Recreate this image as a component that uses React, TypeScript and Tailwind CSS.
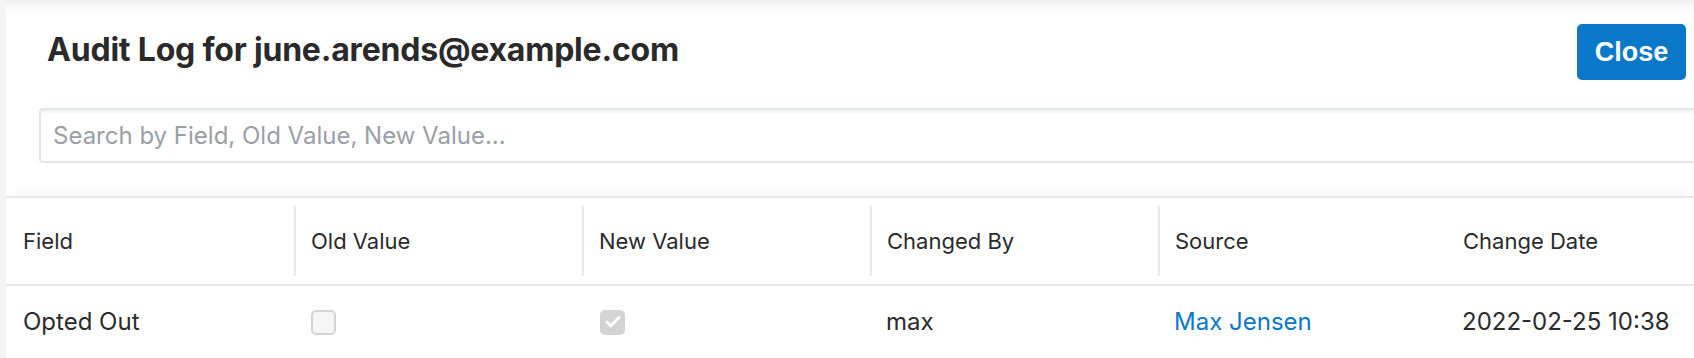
import { Check } from "lucide-react";

const columns = [
  { label: "Field", divider: false },
  { label: "Old Value", divider: true },
  { label: "New Value", divider: true },
  { label: "Changed By", divider: true },
  { label: "Source", divider: true },
  { label: "Change Date", divider: false },
];

function Checkbox({ checked }: { checked: boolean }) {
  if (checked) {
    return (
      <span className="flex h-[25px] w-[25px] items-center justify-center rounded-[5px] bg-[#d3d3d3]">
        <Check className="h-[18px] w-[18px] text-white" strokeWidth={4} />
      </span>
    );
  }
  return <span className="block h-[25px] w-[25px] rounded-[5px] border-2 border-[#d4d4d4] bg-[#f6f6f6]" />;
}

export default function App() {
  return (
    <div className="flex h-[358px] w-full overflow-hidden bg-[#f3f4f6] pl-[6px] font-['Inter',sans-serif] text-[#2b2b2b]">
      {/* modal panel */}
      <div className="flex min-w-0 flex-1 flex-col overflow-hidden bg-white shadow-[inset_0_14px_12px_-10px_rgba(0,0,0,0.09)]">
        <div className="flex items-start justify-between pl-[41px] pr-[8px] pt-[24px]">
          <h1 className="pt-[6px] text-[32px] font-bold leading-[40px] tracking-[-0.2px] text-[#2a2a2a]">
            Audit Log for june.arends@example.com
          </h1>
          <button className="h-[56px] w-[109px] rounded-[5px] bg-[#0a78c9] font-['Liberation_Sans',Arial,sans-serif] text-[27px] font-bold text-white">
            Close
          </button>
        </div>

        <div className="pl-[33px] pt-[28px]">
          <input
            className="h-[55px] w-[1700px] shrink-0 rounded-[4px] border-2 border-[#e3e6ea] px-[12px] text-[24px] text-[#2b2b2b] shadow-[inset_0_3px_3px_-1px_rgba(0,0,0,0.06)] outline-none placeholder:text-[#9aa0a6]"
            placeholder="Search by Field, Old Value, New Value..."
          />
        </div>

        {/* table */}
        <div className="mt-[33px] border-t-2 border-[#e6e8eb] shadow-[0_-10px_12px_-6px_rgba(0,0,0,0.04)]">
          <div className="grid h-[88px] grid-cols-[288px_288px_288px_288px_288px_1fr] border-b-2 border-[#e6e8eb]">
            {columns.map((col) => (
              <div key={col.label} className="flex items-center">
                {col.divider && <div className="h-[70px] w-[2px] bg-[#e6e8eb]" />}
                <span className={`text-[22px] ${col.divider ? "pl-[15px]" : "pl-[17px]"}`}>{col.label}</span>
              </div>
            ))}
          </div>
          <div className="grid h-[72px] grid-cols-[288px_288px_288px_288px_288px_1fr] items-center text-[24px]">
            <div className="pl-[17px]">Opted Out</div>
            <div className="pl-[17px]">
              <Checkbox checked={false} />
            </div>
            <div className="pl-[18px]">
              <Checkbox checked />
            </div>
            <div className="pl-[16px]">max</div>
            <div className="pl-[16px] text-[#0a78c9]">Max Jensen</div>
            <div className="pl-[16px]">2022-02-25 10:38</div>
          </div>
        </div>
      </div>
    </div>
  );
}
